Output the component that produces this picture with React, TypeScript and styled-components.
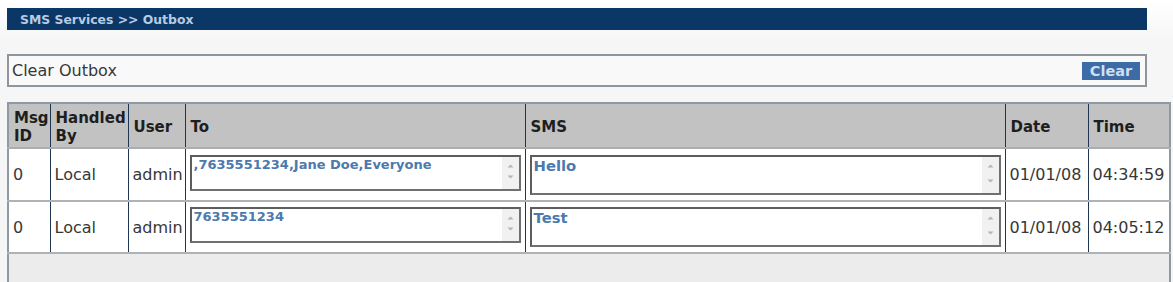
import styled, { createGlobalStyle } from 'styled-components';

interface OutboxRow {
  msgId: string;
  handledBy: string;
  user: string;
  to: string;
  sms: string;
  date: string;
  time: string;
}

const rows: OutboxRow[] = [
  {
    msgId: '0',
    handledBy: 'Local',
    user: 'admin',
    to: ',7635551234,Jane Doe,Everyone',
    sms: 'Hello',
    date: '01/01/08',
    time: '04:34:59',
  },
  {
    msgId: '0',
    handledBy: 'Local',
    user: 'admin',
    to: '7635551234',
    sms: 'Test',
    date: '01/01/08',
    time: '04:05:12',
  },
];

const GlobalStyle = createGlobalStyle`
  html, body {
    margin: 0;
    padding: 0;
    background: #f7f7f7;
  }
  body {
    font-family: "DejaVu Sans", Verdana, sans-serif;
  }
`;

const Page = styled.div`
  width: 1173px;
  height: 282px;
  box-sizing: border-box;
  padding: 8px 0 0 7px;
  background: linear-gradient(#ffffff 0, #f6f6f6 40px);
  overflow: hidden;
`;

const TitleBar = styled.div`
  width: 1140px;
  height: 22px;
  box-sizing: border-box;
  display: flex;
  align-items: center;
  padding-left: 13px;
  background: #0b3767;
  color: #b7cbe3;
  font-size: 12.4px;
  font-weight: bold;
`;

const ClearBox = styled.div`
  width: 1140px;
  height: 33px;
  margin-top: 24px;
  box-sizing: border-box;
  display: flex;
  align-items: center;
  justify-content: space-between;
  padding: 0 5px 0 3px;
  border: 2px solid #8e959c;
  background: #f9f9f9;
  color: #383838;
  font-size: 16px;
`;

const ClearButton = styled.button`
  height: 18px;
  width: 58px;
  padding: 0;
  border: 0;
  background: #3c6ba6;
  color: #cfdff2;
  font-family: inherit;
  font-size: 14.5px;
  line-height: 18px;
  font-weight: bold;
  cursor: pointer;
`;

const Table = styled.table`
  margin-top: 15px;
  width: 1162px;
  border-collapse: collapse;
  border: 2px solid #8e99a6;
  table-layout: fixed;
`;

const HeadCell = styled.th<{ $w: number }>`
  width: ${p => p.$w}px;
  height: 45px;
  box-sizing: border-box;
  padding: 3px 2px 0 5px;
  background: #c2c2c2;
  border-left: 1px solid #1f3552;
  border-bottom: 2px solid #a9aeb3;
  color: #1e1e1e;
  font-size: 15px;
  font-weight: bold;
  line-height: 18px;
  text-align: left;
  vertical-align: middle;
  &:first-child {
    border-left: 0;
  }
`;

const Row = styled.tr<{ $h: number }>`
  height: ${p => p.$h}px;
`;

const Cell = styled.td`
  box-sizing: border-box;
  padding: 0 2px 0 4px;
  background: #ffffff;
  border-left: 1px solid #1f3552;
  border-bottom: 2px solid #aeb3b8;
  color: #373737;
  font-size: 16px;
  white-space: nowrap;
  overflow: hidden;
  vertical-align: middle;
  &:first-child {
    border-left: 0;
  }
`;

const BoxCell = styled(Cell)`
  padding: 0 4px;
`;

const FooterCell = styled.td`
  height: 26px;
  background: #ececec;
`;

const TextBox = styled.div<{ $h: number; $big?: boolean }>`
  height: ${p => p.$h}px;
  box-sizing: border-box;
  display: flex;
  border: 2px solid #5d5d5d;
  border-right-color: #707070;
  border-bottom-color: #707070;
  background: #ffffff;
  color: #4b7aae;
  font-size: ${p => (p.$big ? '14.8px' : '13px')};
  font-weight: bold;
  margin-top: ${p => (p.$big ? '0' : '-4px')};
`;

const BoxText = styled.div`
  flex: 1;
  padding: 0 2px;
  overflow: hidden;
  white-space: nowrap;
`;

const ScrollStrip = styled.div`
  width: 17px;
  display: flex;
  flex-direction: column;
  justify-content: space-between;
  align-items: center;
  padding: 7px 0 10px;
  background: #f1f1f1;
`;

const Arrow = ({ down }: { down?: boolean }) => (
  <svg width="7" height="4" viewBox="0 0 7 4">
    <path d={down ? 'M0.5 0.5 L3.5 3.5 L6.5 0.5 Z' : 'M0.5 3.5 L3.5 0.5 L6.5 3.5 Z'} fill="#b4b4b4" />
  </svg>
);

const ScrollBox = ({ text, h, big }: { text: string; h: number; big?: boolean }) => (
  <TextBox $h={h} $big={big}>
    <BoxText>{text}</BoxText>
    <ScrollStrip>
      <Arrow />
      <Arrow down />
    </ScrollStrip>
  </TextBox>
);

const App = () => (
  <>
    <GlobalStyle />
    <Page>
      <TitleBar>SMS Services &gt;&gt; Outbox</TitleBar>
      <ClearBox>
        <span>Clear Outbox</span>
        <ClearButton>Clear</ClearButton>
      </ClearBox>
      <Table>
        <thead>
          <tr>
            <HeadCell $w={42}>Msg ID</HeadCell>
            <HeadCell $w={78}>Handled By</HeadCell>
            <HeadCell $w={57}>User</HeadCell>
            <HeadCell $w={340}>To</HeadCell>
            <HeadCell $w={480}>SMS</HeadCell>
            <HeadCell $w={83}>Date</HeadCell>
            <HeadCell $w={82}>Time</HeadCell>
          </tr>
        </thead>
        <tbody>
          {rows.map((r, i) => (
            <Row key={i} $h={i === 0 ? 53 : 52}>
              <Cell>{r.msgId}</Cell>
              <Cell>{r.handledBy}</Cell>
              <Cell>{r.user}</Cell>
              <BoxCell>
                <ScrollBox text={r.to} h={36} />
              </BoxCell>
              <BoxCell>
                <ScrollBox text={r.sms} h={40} big />
              </BoxCell>
              <Cell>{r.date}</Cell>
              <Cell>{r.time}</Cell>
            </Row>
          ))}
          <tr>
            <FooterCell colSpan={7} />
          </tr>
        </tbody>
      </Table>
    </Page>
  </>
);

export default App;
